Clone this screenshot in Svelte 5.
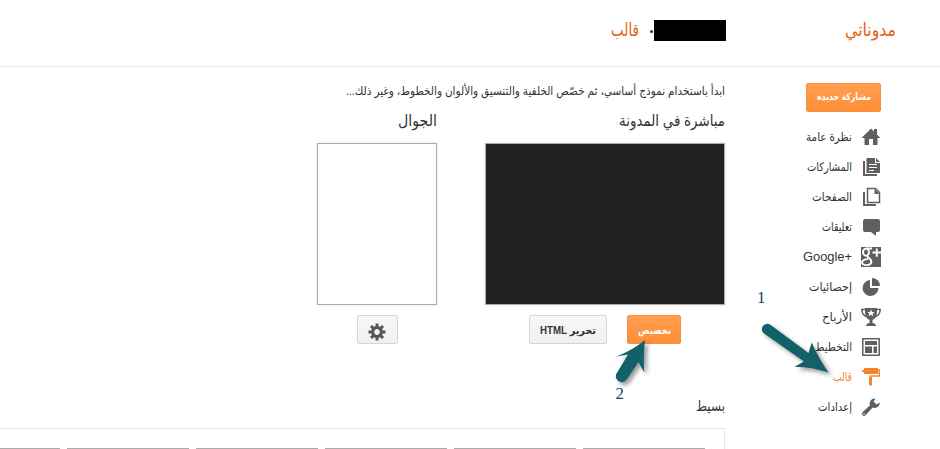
<script>
  const items = [
    { icon: 'home', text: 'نظرة عامة', w: 46 },
    { icon: 'posts', text: 'المشاركات', w: 45 },
    { icon: 'pages', text: 'الصفحات', w: 40 },
    { icon: 'comments', text: 'تعليقات', w: 30 },
    { icon: 'gplus', text: 'Google+', w: 49 },
    { icon: 'stats', text: 'إحصائيات', w: 43 },
    { icon: 'earnings', text: 'الأرباح', w: 30 },
    { icon: 'layout', text: 'التخطيط', w: 37 },
    { icon: 'template', text: 'قالب', w: 19, active: true },
    { icon: 'settings', text: 'إعدادات', w: 34 }
  ];
  const teeth = [0, 45, 90, 135, 180, 225, 270, 315];
  const thumbs = [1, 2, 3, 4, 5, 6];
</script>

{#snippet label(text, w, size, bold = false, dir = 'rtl')}
  <svg class="label" width={w} height="30" direction={dir} style:direction={dir}>
    <text x={w / 2} y="19" text-anchor="middle" textLength={w} lengthAdjust="spacingAndGlyphs" font-size={size} font-weight={bold ? 700 : 400}>{text}</text>
  </svg>
{/snippet}

{#snippet glyph(name)}
  <svg class="icon" width="20" height="20" viewBox="0 0 20 20" fill="currentColor">
    {#if name === 'home'}
      <path d="M1 10.500 10 1.500 13 4.500V2h3v5.500l3 3v.5h-2.500v7H12v-6H8v6H3.500v-7H1z" />
    {:else if name === 'posts'}
      <path d="M5.500 1H14v5h5v10H5.500z" /><path d="M15 1l4 4h-4z" />
      <path d="M3 4v14h13" fill="none" stroke="currentColor" stroke-width="2" />
      <path d="M8 7.500h8M8 10.500h8M8 13.500h5" stroke="#fff" />
    {:else if name === 'pages'}
      <path d="M6.500 1.500h8l4 4v10h-12z" fill="#fff" stroke="currentColor" stroke-width="1.500" />
      <path d="M13.500 1.500V7H18.500z" />
      <path d="M3 5v13h12" fill="none" stroke="currentColor" stroke-width="2" />
    {:else if name === 'comments'}
      <path d="M4 2h13q2 0 2 2v9q0 2-2 2h-2v4l-5-4H4q-2 0-2-2V4q0-2 2-2z" />
    {:else if name === 'gplus'}
      <path d="M0 0h20v20H0z" />
      <g fill="none" stroke="#fff" stroke-width="1.900">
        <ellipse cx="5" cy="5.200" rx="3" ry="3.600" />
        <path d="M5 1.500h6M6.500 9c0 2 3.800 2.600 3.800 5.500 0 4.800-9.300 4.500-9.300 1 0-2.600 3.500-3.500 6-3.400M11.500 5.500H20M15.800 1.500v8.200" />
      </g>
    {:else if name === 'stats'}
      <path d="M9 3v8h8.500A8 8 0 1 1 9 3z" /><path d="M11 1a8 8 0 0 1 8 8h-8z" />
    {:else if name === 'earnings'}
      <path d="M4 1h12v4q0 6-4.500 8v3q3 0 3.500 3H5q.5-3 3.500-3v-3Q4 11 4 5z" />
      <path d="M4 2.500H.8q0 6 6 7.500M16 2.500h3.200q0 6-6 7.500" fill="none" stroke="currentColor" stroke-width="1.500" />
      <path d="M10 2.500l1 2.500h2.700l-2.100 1.700.8 2.600L10 7.800 7.600 9.300l.8-2.600L6.300 5H9z" fill="#fff" />
    {:else if name === 'layout'}
      <path d="M1.800 1.800h16.400v16.400H1.800z" fill="none" stroke="currentColor" stroke-width="1.500" />
      <path d="M4 4h12v4H4zM4 9.500h7V16H4zM12.500 9.500H16V16h-3.500z" />
    {:else if name === 'template'}
      <path d="M3 1h14v6H3zM1 3h2v2H1z" />
      <path d="M17 3h1.300v6H9.500v3" fill="none" stroke="currentColor" stroke-width="1.500" />
      <path d="M8 10h3v8.500H8z" />
    {:else}
      <path d="M18.700 5.500a5 5 0 0 1-7 5l-7.200 7.700a2 2 0 0 1-3-3L9 8.300A5 5 0 0 1 14.500 1.500L12.500 4.500l3 3z" />
      <circle cx="3" cy="17" r=".8" fill="#fff" />
    {/if}
  </svg>
{/snippet}

<div class="page" dir="rtl">
  <header>
    <div class="brand">{@render label('مدوناتي', 51, 18)}</div>
    <div class="crumb">
      <span class="blog-name"></span><span class="dot"></span>
      {@render label('قالب', 28, 18)}
    </div>
  </header>
  <div class="body">
    <nav>
      <button class="btn primary new-post">{@render label('مشاركة جديدة', 54, 10, true)}</button>
      <ul>
        {#each items as item}
          <li class:active={item.active}>
            {@render glyph(item.icon)}
            {@render label(item.text, item.w, item.icon === 'gplus' ? 13 : 12, false, item.icon === 'gplus' ? 'ltr' : 'rtl')}
          </li>
        {/each}
      </ul>
    </nav>
    <main>
      <div class="intro">{@render label('ابدأ باستخدام نموذج أساسي، ثم خصّص الخلفية والتنسيق والألوان والخطوط، وغير ذلك...', 379, 12)}</div>
      <div class="previews">
        <section class="blog">
          <h2>{@render label('مباشرة في المدونة', 106, 16)}</h2>
          <div class="frame dark"></div>
          <div class="actions">
            <button class="btn primary customize">{@render label('تخصيص', 33, 10, true)}</button>
            <button class="btn edit">{@render label('تحرير HTML', 56, 11, true)}</button>
          </div>
        </section>
        <section class="mobile">
          <h2>{@render label('الجوال', 39, 16)}</h2>
          <div class="frame"></div>
          <div class="actions">
            <button class="btn gear" aria-label="gear">
              <svg width="18" height="18" viewBox="-9 -9 18 18">
                {#each teeth as a}<rect x="-1.500" y="-8.500" width="3" height="4.500" fill="#555" transform="rotate({a})" />{/each}
                <circle r="4.400" fill="none" stroke="#555" stroke-width="3" />
              </svg>
            </button>
          </div>
        </section>
      </div>
      <h2 class="simple">{@render label('بسيط', 29, 15)}</h2>
      <div class="gallery">
        {#each thumbs as t}<span class="thumb"></span>{/each}
      </div>
    </main>
  </div>
  <svg class="notes" width="940" height="449" direction="ltr">
    <g class="arrows">
      <path d="M770 324.500 808.500 353 811.700 342.500Q819 359 828.500 372.500Q813 367 794.500 366.700L804 361.500 764.500 333.800A5.200 5.200 0 0 1 770 324.500z" />
      <path d="M645 340Q643 357 644.300 372.500L638.500 362 627 379A5.700 5.700 0 0 1 616.500 373.500L628 354.500 616.500 356.500Q633 350 645 340z" />
    </g>
    <text x="757" y="303">1</text>
    <text x="615.500" y="399">2</text>
  </svg>
</div>

<style>
  :global(body) { margin: 0; background: #fff; }
  .page { position: relative; width: 940px; height: 449px; overflow: hidden; color: #333; font-family: "Liberation Sans", "DejaVu Sans", sans-serif; }
  svg { display: block; flex: none; }
  .label { overflow: visible; fill: currentColor; }
  header { display: flex; height: 66px; border-bottom: 1px solid #e8e8e8; padding-right: 44px; color: #e4600f; }
  .brand { width: 170px; padding-top: 17px; }
  .crumb { display: flex; align-items: flex-start; padding-top: 17px; }
  .blog-name { width: 72px; height: 21px; margin-top: 3px; background: #000; }
  .dot { width: 3px; height: 3px; margin: 13px 1px 0 11px; border-radius: 50%; background: #333; }
  .body { display: flex; padding-right: 59px; }
  nav { width: 156px; padding-top: 16px; }
  .btn { display: flex; align-items: center; justify-content: center; box-sizing: border-box; height: 29px; padding: 0; border: 1px solid #d5d5d5; border-radius: 2px; background: linear-gradient(#f7f7f7, #f0f0f0); color: #333; font-family: inherit; }
  .primary { border-color: #f6913e; background: linear-gradient(#ff9f50, #ff8d38); color: #fff; }
  .new-post { width: 75px; }
  .new-post .label { margin-top: -4px; }
  .customize { width: 54px; }
  .edit { width: 78px; }
  .gear { width: 41px; padding-top: 4px; }
  ul { list-style: none; margin: 10px 0 0; padding: 0; }
  li { display: flex; align-items: center; gap: 9px; height: 30px; }
  .icon { color: #5f5f5f; }
  .active, .active .icon { color: #f6852f; }
  main { width: 725px; }
  .intro { height: 30px; margin-top: 9px; }
  .previews { display: flex; gap: 48px; }
  .blog { width: 240px; }
  .mobile { width: 120px; }
  h2 { box-sizing: border-box; margin: 0; height: 37px; padding-top: 1px; font-weight: 400; }
  .frame { box-sizing: border-box; height: 162px; border: 1px solid #aaa; box-shadow: 0 0 2px #ddd; background: #fff; }
  .dark { background: #222; }
  .actions { display: flex; justify-content: center; gap: 20px; margin-top: 10px; }
  .simple { margin-top: 48px; height: 36px; padding-top: 0; }
  .gallery { display: flex; gap: 7px; box-sizing: border-box; width: 740px; height: 40px; padding: 19px 19px 0 0; border: 1px solid #e6e6e6; overflow: hidden; }
  .thumb { flex: none; box-sizing: border-box; width: 122px; height: 80px; border: 1px solid #aaa; }
  .notes { position: absolute; left: 0; top: 0; pointer-events: none; }
  .notes text { font: 17px "Liberation Serif", serif; fill: #1f3d68; }
  .arrows { fill: #12606a; filter: drop-shadow(3px 3px 2px rgba(0, 0, 0, 0.4)); }
</style>
